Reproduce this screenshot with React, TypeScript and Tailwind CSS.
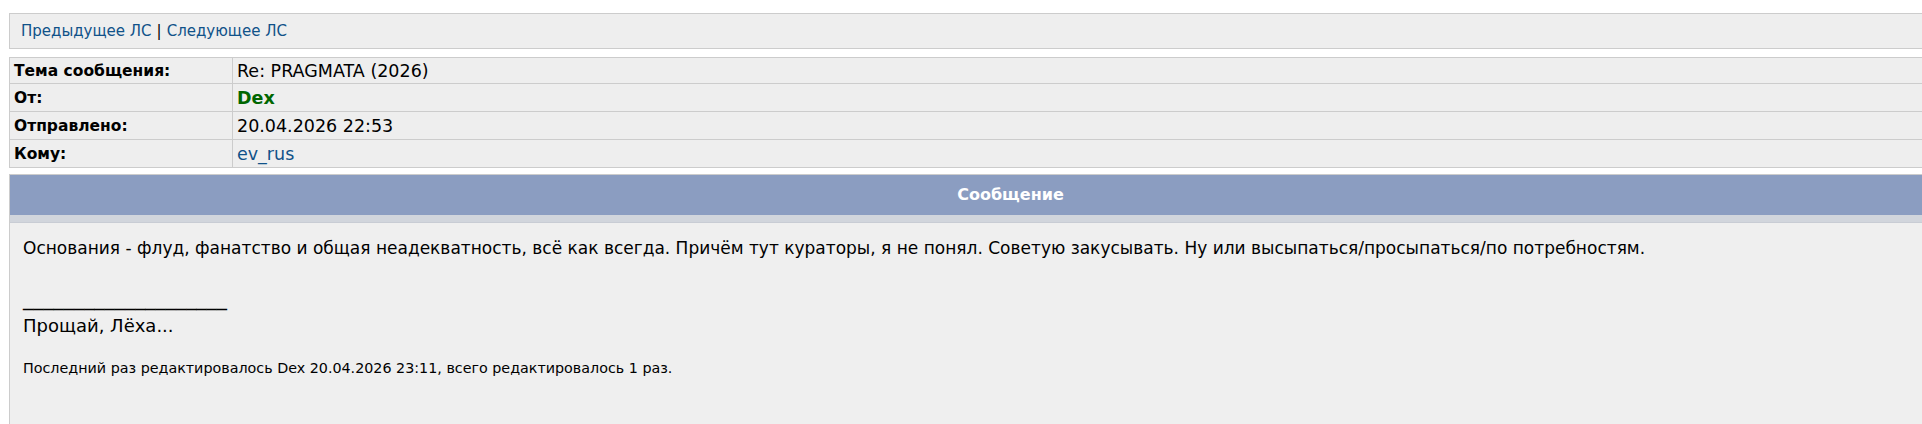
const rows = [
  { label: 'Тема сообщения:', value: <span className="text-black">Re: PRAGMATA (2026)</span>, h: 'h-[26px]' },
  { label: 'От:', value: <span className="font-bold text-[#006600]">Dex</span>, h: 'h-[28px]' },
  { label: 'Отправлено:', value: <span className="text-black">20.04.2026 22:53</span>, h: 'h-[28px]' },
  { label: 'Кому:', value: <a className="text-[#105289]">ev_rus</a>, h: 'h-[28px]' },
]

export default function App() {
  return (
    <div
      className="w-[2011px] bg-white pl-[9px] pt-[13px]"
      style={{ fontFamily: '"DejaVu Sans", Verdana, sans-serif' }}
    >
      <div className="h-[36px] border border-[#cccccc] bg-[#eeeeee] px-[11px] flex items-center text-[15px] text-[#105289]">
        <a>Предыдущее ЛС</a>
        <span className="mx-[5px] text-black">|</span>
        <a>Следующее ЛС</a>
      </div>

      <table className="mt-[8px] w-full border-collapse">
        <tbody>
          {rows.map((r) => (
            <tr key={r.label} className={r.h}>
              <td className="w-[223px] border border-[#cccccc] bg-[#eeeeee] px-[4px] py-0 text-[15.5px] leading-[20px] font-bold text-black">
                {r.label}
              </td>
              <td className="border border-[#cccccc] bg-[#eeeeee] px-[4px] py-0 text-[17.5px] leading-[20px]">
                {r.value}
              </td>
            </tr>
          ))}
        </tbody>
      </table>

      <div className="mt-[6px] border-l border-t border-[#cccccc]">
        <div className="h-[40px] bg-[#8b9dc1] flex items-center justify-center text-[16px] font-bold text-white">
          Сообщение
        </div>
        <div className="h-[8px] bg-[#d1d5dc] border-b border-[#c8ccd4]" />
        <div className="h-[210px] bg-[#efefef] px-[13px] pt-[13px] text-[17px] text-black">
          <p>
            Основания - флуд, фанатство и общая неадекватность, всё как всегда. Причём тут кураторы, я не
            понял. Советую закусывать. Ну или высыпаться/просыпаться/по потребностям.
          </p>
          <p className="mt-[25px] text-[20.4px] leading-[22px]">____________________</p>
          <p className="mt-[6px] leading-[22px] text-[18px]">Прощай, Лёха...</p>
          <p className="mt-[21px] text-[14.3px]">
            Последний раз редактировалось Dex 20.04.2026 23:11, всего редактировалось 1 раз.
          </p>
        </div>
      </div>
    </div>
  )
}
